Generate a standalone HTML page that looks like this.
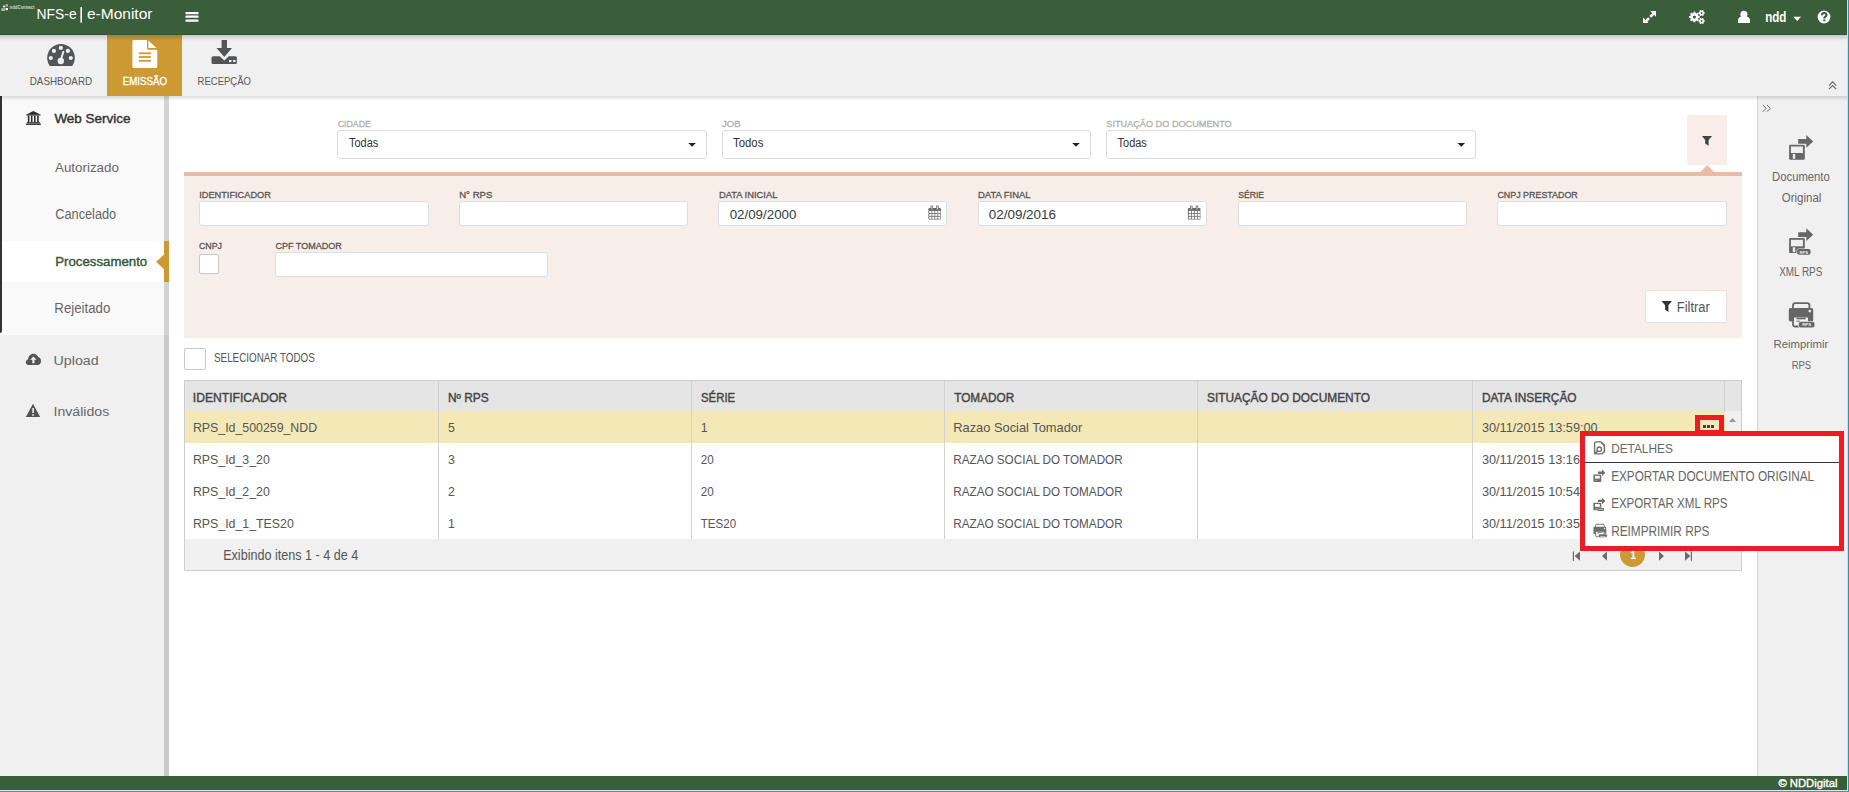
<!DOCTYPE html>
<html><head><meta charset="utf-8">
<style>
html,body{margin:0;padding:0;width:1849px;height:792px;overflow:hidden;background:#fff;font-family:"Liberation Sans",sans-serif;}
.a{position:absolute;box-sizing:border-box;}
svg{position:absolute;left:0;top:0;}
</style></head><body>
<!-- frame -->
<div class="a" style="left:1847px;top:0;width:1px;height:792px;background:#dcdcdc"></div>
<div class="a" style="left:1848px;top:0;width:1px;height:792px;background:#3f8aa8"></div>
<div class="a" style="left:0;top:790px;width:1848px;height:1px;background:#e4e4e4"></div>
<div class="a" style="left:0;top:791px;width:1849px;height:1px;background:#4a95b5"></div>
<!-- header -->
<div class="a" style="left:0;top:0;width:1847px;height:35px;background:#3b5e3a;border-bottom:1px solid #325634"></div>
<!-- toolbar -->
<div class="a" style="left:0;top:35px;width:1847px;height:61px;background:#f0f0f0"></div>
<div class="a" style="left:107px;top:35px;width:75px;height:61px;background:#cc9933"></div>
<div class="a" style="left:0;top:35px;width:1847px;height:6px;background:linear-gradient(rgba(0,0,0,.17),rgba(0,0,0,0))"></div>
<!-- sidebar -->
<div class="a" style="left:0;top:96px;width:164px;height:680px;background:#f0f0f0"></div>
<div class="a" style="left:164px;top:96px;width:5px;height:680px;background:#cbcbcb"></div>
<div class="a" style="left:164px;top:96px;width:5px;height:239px;background:#d3d3d3"></div>
<div class="a" style="left:0;top:96px;width:164px;height:239px;background:#f9f9f9"></div>
<div class="a" style="left:0;top:96px;width:2px;height:237px;background:#333;border-radius:0 0 2px 0"></div>
<div class="a" style="left:2px;top:241px;width:162px;height:41px;background:#fff"></div>
<div class="a" style="left:164px;top:241px;width:5px;height:41px;background:#cc9933"></div>
<svg width="200" height="300" style="z-index:1"><path fill="#cc9933" d="M164.2,254.4 L156.1,261.7 L164.2,269.4 Z"/></svg>
<!-- right panel -->
<div class="a" style="left:1757px;top:96px;width:90px;height:680px;background:#f0f0f0;border-left:1px solid #d4d4d4"></div>
<!-- toolbar shadow -->
<div class="a" style="left:0;top:96px;width:1847px;height:5px;background:linear-gradient(rgba(0,0,0,.13),rgba(0,0,0,0))"></div>
<!-- footer -->
<div class="a" style="left:0;top:776px;width:1847px;height:14px;background:#3b5e3a"></div>

<!-- filter selects -->
<div class="a" style="left:337px;top:130px;width:370px;height:29px;border:1px solid #dcdcdc;border-radius:3px;background:#fff"></div>
<div class="a" style="left:722px;top:130px;width:369px;height:29px;border:1px solid #dcdcdc;border-radius:3px;background:#fff"></div>
<div class="a" style="left:1106px;top:130px;width:370px;height:29px;border:1px solid #dcdcdc;border-radius:3px;background:#fff"></div>
<div class="a" style="left:1687px;top:115px;width:40px;height:50px;background:#f8ede8"></div>
<!-- filter panel -->
<div class="a" style="left:184px;top:172px;width:1558px;height:166px;background:#f8eee9;border-top:4px solid #e8bca6"></div>
<div class="a" style="left:199px;top:201px;width:230px;height:25px;border:1px solid #d8e0e3;border-radius:3px;background:#fff"></div>
<div class="a" style="left:459px;top:201px;width:229px;height:25px;border:1px solid #d8e0e3;border-radius:3px;background:#fff"></div>
<div class="a" style="left:718px;top:201px;width:229px;height:25px;border:1px solid #d8e0e3;border-radius:3px;background:#fff"></div>
<div class="a" style="left:978px;top:201px;width:229px;height:25px;border:1px solid #d8e0e3;border-radius:3px;background:#fff"></div>
<div class="a" style="left:1238px;top:201px;width:229px;height:25px;border:1px solid #d8e0e3;border-radius:3px;background:#fff"></div>
<div class="a" style="left:1497px;top:201px;width:230px;height:25px;border:1px solid #d8e0e3;border-radius:3px;background:#fff"></div>
<div class="a" style="left:199px;top:254px;width:20px;height:20px;border:1px solid #c8c8c8;border-radius:2px;background:#fff"></div>
<div class="a" style="left:275px;top:252px;width:273px;height:25px;border:1px solid #d8e0e3;border-radius:3px;background:#fff"></div>
<div class="a" style="left:1645px;top:290px;width:82px;height:33px;border:1px solid #e6dfdc;border-radius:3px;background:#fff"></div>
<!-- select all -->
<div class="a" style="left:184px;top:348px;width:22px;height:22px;border:1px solid #c8c8c8;border-radius:2px;background:#fff"></div>
<!-- table -->
<div class="a" style="left:184px;top:380px;width:1558px;height:191px;border:1px solid #cdcdcd;background:#fff"></div>
<div class="a" style="left:185px;top:381px;width:1556px;height:30px;background:#e5e5e5"></div>
<div class="a" style="left:185px;top:411px;width:1540px;height:32px;background:#f4e8b6"></div>
<div class="a" style="left:1725px;top:411px;width:16px;height:128px;background:#f0f0f0"></div>
<div class="a" style="left:185px;top:539px;width:1556px;height:31px;background:#f0f0f0"></div>
<div class="a" style="left:438px;top:381px;width:1px;height:158px;background:#d2d2d2"></div>
<div class="a" style="left:691px;top:381px;width:1px;height:158px;background:#d2d2d2"></div>
<div class="a" style="left:944px;top:381px;width:1px;height:158px;background:#d2d2d2"></div>
<div class="a" style="left:1197px;top:381px;width:1px;height:158px;background:#d2d2d2"></div>
<div class="a" style="left:1472px;top:381px;width:1px;height:158px;background:#d2d2d2"></div>
<div class="a" style="left:1724px;top:381px;width:1px;height:30px;background:#d2d2d2"></div>
<!-- pager circle -->
<div class="a" style="left:1620px;top:542px;width:25px;height:25px;border-radius:50%;background:#cc9933"></div>

<svg width="1849" height="792" style="z-index:2">
<g fill="#ffffff"><rect x="5.6" y="4.2" width="2.4" height="2.4" opacity="0.55"/><rect x="3" y="5.6" width="2.2" height="1.8" opacity="0.9"/><rect x="5.6" y="8" width="2.4" height="2.2" opacity="1"/><rect x="1.3" y="8.2" width="3.8" height="2.8" opacity="0.55"/></g>
<text x="9.6" y="8.8" font-size="5.2" font-weight="700" fill="#e2eae2" font-family="Liberation Sans" textLength="24.8" lengthAdjust="spacingAndGlyphs" opacity="0.85">nddConnect</text>
<rect x="80.4" y="7.1" width="1.6" height="15.5" fill="#fff"/>
<g fill="#fff"><rect x="185.5" y="12" width="13" height="2.2" rx="0.6"/><rect x="185.5" y="15.6" width="13" height="2.2" rx="0.6"/><rect x="185.5" y="19.6" width="13" height="2.2" rx="0.6"/></g>
<g fill="#fff"><path d="M1650.2,11 H1656 V16.8 Z"/><path d="M1643,17.6 V23 H1648.6 Z"/><path d="M1645.6,21.6 L1649,18.2 M1650.3,16.9 L1653.8,13.4" stroke="#fff" stroke-width="2.6"/></g>
<path fill="#fff" fill-rule="evenodd" d="M1698.48,15.99 L1699.71,16.02 L1699.71,17.98 L1698.48,18.01 L1698.00,19.17 L1698.85,20.06 L1697.46,21.45 L1696.57,20.60 L1695.41,21.08 L1695.38,22.31 L1693.42,22.31 L1693.39,21.08 L1692.23,20.60 L1691.34,21.45 L1689.95,20.06 L1690.80,19.17 L1690.32,18.01 L1689.09,17.98 L1689.09,16.02 L1690.32,15.99 L1690.80,14.83 L1689.95,13.94 L1691.34,12.55 L1692.23,13.40 L1693.39,12.92 L1693.42,11.69 L1695.38,11.69 L1695.41,12.92 L1696.57,13.40 L1697.46,12.55 L1698.85,13.94 L1698.00,14.83ZM1696.00,17.00 a1.6,1.6 0 1 0 -3.20,0 a1.6,1.6 0 1 0 3.20,0Z"/>
<path fill="#fff" fill-rule="evenodd" d="M1703.97,12.20 L1704.71,12.23 L1704.71,13.77 L1703.97,13.80 L1703.48,14.65 L1703.82,15.30 L1702.48,16.08 L1702.09,15.45 L1701.11,15.45 L1700.72,16.08 L1699.38,15.30 L1699.72,14.65 L1699.23,13.80 L1698.49,13.77 L1698.49,12.23 L1699.23,12.20 L1699.72,11.35 L1699.38,10.70 L1700.72,9.92 L1701.11,10.55 L1702.09,10.55 L1702.48,9.92 L1703.82,10.70 L1703.48,11.35ZM1702.50,13.00 a0.9,0.9 0 1 0 -1.80,0 a0.9,0.9 0 1 0 1.80,0Z"/>
<path fill="#fff" fill-rule="evenodd" d="M1703.97,20.20 L1704.71,20.23 L1704.71,21.77 L1703.97,21.80 L1703.48,22.65 L1703.82,23.30 L1702.48,24.08 L1702.09,23.45 L1701.11,23.45 L1700.72,24.08 L1699.38,23.30 L1699.72,22.65 L1699.23,21.80 L1698.49,21.77 L1698.49,20.23 L1699.23,20.20 L1699.72,19.35 L1699.38,18.70 L1700.72,17.92 L1701.11,18.55 L1702.09,18.55 L1702.48,17.92 L1703.82,18.70 L1703.48,19.35ZM1702.50,21.00 a0.9,0.9 0 1 0 -1.80,0 a0.9,0.9 0 1 0 1.80,0Z"/>
<circle cx="1743.9" cy="14.2" r="3.5" fill="#fff"/>
<path fill="#fff" d="M1738.1,22.9 V20.6 C1738.1,18.2 1739.4,16.9 1741.2,16.6 C1742.6,17.6 1745.2,17.6 1746.8,16.6 C1748.7,16.9 1750,18.2 1750,20.6 V22.9 Z"/>
<path fill="#fff" d="M1793.3,16.8 H1801.1 L1797.2,20.9 Z"/>
<circle cx="1824" cy="17" r="6.4" fill="#fff"/>
<path fill="none" stroke="#3b5e3a" stroke-width="2.1" d="M1821.9,15.3 C1821.9,13.6 1823,13 1824.2,13 C1825.6,13 1826.5,13.9 1826.5,15 C1826.5,16.6 1824.3,16.7 1824.3,18.6"/>
<rect x="1823.3" y="19.4" width="2" height="1.8" fill="#3b5e3a"/>
<path fill="#525456" d="M49.8,65.9 A13.8,13.8 0 1 1 72.2,65.9 Z"/>
<circle cx="60.8" cy="47.9" r="2.1" fill="#f0f0f0"/>
<circle cx="53.9" cy="50.9" r="2.1" fill="#f0f0f0"/>
<circle cx="67.9" cy="50.9" r="2.1" fill="#f0f0f0"/>
<circle cx="50.8" cy="58" r="2.1" fill="#f0f0f0"/>
<circle cx="70.8" cy="58" r="2.1" fill="#f0f0f0"/>
<circle cx="60.8" cy="61" r="3.2" fill="#f0f0f0"/>
<path d="M60.8,60 L63.4,51.6" stroke="#f0f0f0" stroke-width="1.9" stroke-linecap="round"/>
<path fill="#fff" d="M132.4,41.5 Q132.4,40 133.9,40 H147 V48.6 Q147,49.7 148.1,49.7 H157.3 V66.4 Q157.3,67.9 155.8,67.9 H133.9 Q132.4,67.9 132.4,66.4 Z"/>
<path fill="#fff" d="M148.3,40.6 V48.1 H156.5 Z"/>
<g fill="#cc9933"><rect x="138.8" y="52.4" width="12.1" height="1.8"/><rect x="138.8" y="56.1" width="12.1" height="1.8"/><rect x="138.8" y="59.9" width="12.1" height="1.8"/></g>
<g fill="#525456"><rect x="221.6" y="40" width="5.4" height="9"/><path d="M216.5,48.1 H232 L224.3,57 Z"/>
<path d="M213,56.2 H219.7 L224.3,60.6 L228.8,56.2 H235.4 Q236.9,56.2 236.9,57.7 V62.4 Q236.9,63.9 235.4,63.9 H213 Q211.5,63.9 211.5,62.4 V57.7 Q211.5,56.2 213,56.2 Z"/></g>
<g fill="#f0f0f0"><rect x="229" y="60" width="2.5" height="2.1"/><rect x="233.1" y="60" width="2.4" height="2.1"/></g>
<g fill="#2b2b2b"><path d="M25.9,114.8 L33.3,111 L40.9,114.8 Z"/><rect x="26.3" y="114.6" width="14.2" height="0.9"/>
<rect x="27.8" y="115.6" width="1.6" height="6.8"/>
<rect x="30.9" y="115.6" width="1.6" height="6.8"/>
<rect x="34.0" y="115.6" width="1.6" height="6.8"/>
<rect x="37.1" y="115.6" width="1.6" height="6.8"/>
<rect x="26.8" y="122.2" width="13.2" height="1.2"/><rect x="25.9" y="123.6" width="15" height="1.3"/></g>
<path fill="#525456" d="M28.5,365 C26.9,365 25.8,363.9 25.8,362.3 C25.8,360.9 26.8,359.8 28.1,359.6 C28.2,356.4 30.5,353.8 33.5,353.8 C35.7,353.8 37.4,355.1 38.1,357 C39.9,357.3 41,358.9 41,360.9 C41,363.2 39.6,365 37.5,365 Z"/>
<path fill="#f0f0f0" d="M33.4,356.6 L36.6,359.8 H34.5 V363.2 H32.3 V359.8 H30.2 Z"/>
<path fill="#525456" d="M33,403.8 L40.2,416.9 H25.8 Z"/>
<g fill="#f0f0f0"><rect x="32.3" y="408" width="1.6" height="5"/><rect x="32.3" y="414.2" width="1.6" height="1.6"/></g>
<path fill="none" stroke="#666" stroke-width="1.1" d="M1828.9,85.6 L1832.6,81.9 L1836.3,85.6 M1828.9,89.2 L1832.6,85.5 L1836.3,89.2"/>
<path fill="none" stroke="#6a6a6a" stroke-width="1.0" d="M1762.8,104.9 L1766.1,108.3 L1762.8,111.7 M1767,104.9 L1770.3,108.3 L1767,111.7"/>
<path fill="#222" d="M688.3,143.1 H695.9 L692.1,146.8 Z"/>
<path fill="#222" d="M1072.2,143.1 H1079.8 L1076.0,146.8 Z"/>
<path fill="#222" d="M1457.5,143.1 H1465.1 L1461.3,146.8 Z"/>
<path fill="#444" d="M1702,136 H1712.1 L1708.6,140 V145.8 L1705.2,143.6 V140 Z"/>
<path fill="#e8bca6" d="M1700.1,172.2 L1707.2,165.1 L1714.3,172.2 Z"/>
<path fill="#333" d="M1661.5,301 H1672 L1668.4,305.2 V312 L1665.1,309.8 V305.2 Z"/>
<rect x="928.4" y="208" width="12.5" height="11.6" rx="0.8" fill="#6a6a6a"/>
<rect x="929.30" y="210.90" width="2.2" height="2.1" fill="#fff"/>
<rect x="929.30" y="213.80" width="2.2" height="2.1" fill="#fff"/>
<rect x="929.30" y="216.70" width="2.2" height="2.1" fill="#fff"/>
<rect x="932.25" y="210.90" width="2.2" height="2.1" fill="#fff"/>
<rect x="932.25" y="213.80" width="2.2" height="2.1" fill="#fff"/>
<rect x="932.25" y="216.70" width="2.2" height="2.1" fill="#fff"/>
<rect x="935.20" y="210.90" width="2.2" height="2.1" fill="#fff"/>
<rect x="935.20" y="213.80" width="2.2" height="2.1" fill="#fff"/>
<rect x="935.20" y="216.70" width="2.2" height="2.1" fill="#fff"/>
<rect x="938.15" y="210.90" width="2.2" height="2.1" fill="#fff"/>
<rect x="938.15" y="213.80" width="2.2" height="2.1" fill="#fff"/>
<rect x="938.15" y="216.70" width="2.2" height="2.1" fill="#fff"/>
<rect x="931.0" y="206" width="1.7" height="3.8" fill="#ddd" stroke="#6a6a6a" stroke-width="0.7"/>
<rect x="936.6" y="206" width="1.7" height="3.8" fill="#ddd" stroke="#6a6a6a" stroke-width="0.7"/>
<rect x="1187.9" y="208" width="12.5" height="11.6" rx="0.8" fill="#6a6a6a"/>
<rect x="1188.80" y="210.90" width="2.2" height="2.1" fill="#fff"/>
<rect x="1188.80" y="213.80" width="2.2" height="2.1" fill="#fff"/>
<rect x="1188.80" y="216.70" width="2.2" height="2.1" fill="#fff"/>
<rect x="1191.75" y="210.90" width="2.2" height="2.1" fill="#fff"/>
<rect x="1191.75" y="213.80" width="2.2" height="2.1" fill="#fff"/>
<rect x="1191.75" y="216.70" width="2.2" height="2.1" fill="#fff"/>
<rect x="1194.70" y="210.90" width="2.2" height="2.1" fill="#fff"/>
<rect x="1194.70" y="213.80" width="2.2" height="2.1" fill="#fff"/>
<rect x="1194.70" y="216.70" width="2.2" height="2.1" fill="#fff"/>
<rect x="1197.65" y="210.90" width="2.2" height="2.1" fill="#fff"/>
<rect x="1197.65" y="213.80" width="2.2" height="2.1" fill="#fff"/>
<rect x="1197.65" y="216.70" width="2.2" height="2.1" fill="#fff"/>
<rect x="1190.5" y="206" width="1.7" height="3.8" fill="#ddd" stroke="#6a6a6a" stroke-width="0.7"/>
<rect x="1196.1" y="206" width="1.7" height="3.8" fill="#ddd" stroke="#6a6a6a" stroke-width="0.7"/>
<rect x="1789.10" y="144.80" width="15.70" height="15.00" rx="1.20" fill="#666666"/>
<rect x="1790.90" y="146.50" width="12.00" height="6.50" fill="#f0f0f0"/>
<rect x="1792.80" y="154.00" width="2.40" height="4.80" fill="#f0f0f0"/>
<path d="M1798.20,139.00 H1806.30 V134.90 L1813.20,141.40 L1806.30,147.80 V143.70 H1798.20 Z" fill="#666666" stroke="#f0f0f0" stroke-width="1.20" paint-order="stroke"/>
<rect x="1789.10" y="238.10" width="15.70" height="15.00" rx="1.20" fill="#666666"/>
<rect x="1790.90" y="239.80" width="12.00" height="6.50" fill="#f0f0f0"/>
<rect x="1792.80" y="247.30" width="2.40" height="4.80" fill="#f0f0f0"/>
<path d="M1798.20,232.30 H1806.30 V228.20 L1813.20,234.70 L1806.30,241.10 V237.00 H1798.20 Z" fill="#666666" stroke="#f0f0f0" stroke-width="1.20" paint-order="stroke"/>
<rect x="1797.10" y="249.00" width="13.50" height="5.80" rx="2.00" fill="#666666" stroke="#f0f0f0" stroke-width="1.20" paint-order="stroke"/>
<text x="1803.85" y="253.50" font-size="4.20" font-weight="700" fill="#f0f0f0" text-anchor="middle" font-family="Liberation Sans">RPS</text>
<rect x="1793.00" y="303.20" width="16.40" height="7.00" rx="2.20" fill="none" stroke="#666666" stroke-width="1.80"/>
<rect x="1788.80" y="307.90" width="24.40" height="13.70" rx="1.80" fill="#666666"/>
<circle cx="1809.80" cy="311.10" r="1.30" fill="#f0f0f0"/>
<rect x="1793.10" y="316.50" width="15.80" height="10.00" rx="1.50" fill="#f0f0f0" stroke="#666666" stroke-width="1.80"/>
<rect x="1796.50" y="317.90" width="9.20" height="1.40" fill="#666666"/>
<rect x="1796.50" y="320.70" width="3.50" height="1.00" fill="#666666"/>
<rect x="1798.80" y="321.80" width="15.70" height="5.80" rx="2.00" fill="#666666" stroke="#f0f0f0" stroke-width="1.20" paint-order="stroke"/>
<text x="1806.65" y="326.40" font-size="4.40" font-weight="700" fill="#f0f0f0" text-anchor="middle" font-family="Liberation Sans">RPS</text>
<path fill="#999" d="M1728.9,421.9 L1732.5,417.9 L1736,421.9 Z"/>
<g fill="#6b6b6b"><rect x="1572.8" y="551.4" width="1.2" height="9.4"/><path d="M1580,551.4 V560.8 L1574.6,556.1 Z"/>
<path d="M1607,551.4 V560.8 L1602,556.1 Z"/><path d="M1659,551.4 V560.8 L1664,556.1 Z"/>
<path d="M1685,551.4 V560.8 L1690.4,556.1 Z"/><rect x="1690.8" y="551.4" width="1.2" height="9.4"/></g>
<text x="36.61" y="19.00" font-size="15.55" font-weight="400" fill="#ffffff" textLength="40.07" lengthAdjust="spacingAndGlyphs">NFS-e</text>
<text x="86.90" y="19.00" font-size="15.55" font-weight="400" fill="#ffffff" textLength="65.58" lengthAdjust="spacingAndGlyphs">e-Monitor</text>
<text x="1765.20" y="22.00" font-size="14.03" font-weight="700" fill="#ffffff" textLength="21.26" lengthAdjust="spacingAndGlyphs">ndd</text>
<text x="29.70" y="85.10" font-size="11.34" font-weight="400" fill="#595959" textLength="62.46" lengthAdjust="spacingAndGlyphs">DASHBOARD</text>
<text x="122.80" y="85.10" font-size="10.21" font-weight="400" fill="#ffffff" stroke="#ffffff" stroke-width="0.33" textLength="44.24" lengthAdjust="spacingAndGlyphs">EMISSÃO</text>
<text x="197.60" y="85.10" font-size="11.34" font-weight="400" fill="#595959" textLength="53.34" lengthAdjust="spacingAndGlyphs">RECEPÇÃO</text>
<text x="54.40" y="123.10" font-size="12.43" font-weight="400" fill="#333333" stroke="#333333" stroke-width="0.40" textLength="76.10" lengthAdjust="spacingAndGlyphs">Web Service</text>
<text x="55.00" y="171.90" font-size="13.52" font-weight="400" fill="#666666" textLength="63.91" lengthAdjust="spacingAndGlyphs">Autorizado</text>
<text x="55.30" y="219.20" font-size="13.95" font-weight="400" fill="#666666" textLength="60.87" lengthAdjust="spacingAndGlyphs">Cancelado</text>
<text x="55.30" y="266.00" font-size="11.91" font-weight="400" fill="#34573a" stroke="#34573a" stroke-width="0.38" textLength="91.88" lengthAdjust="spacingAndGlyphs">Processamento</text>
<text x="54.35" y="313.00" font-size="13.95" font-weight="400" fill="#666666" textLength="56.01" lengthAdjust="spacingAndGlyphs">Rejeitado</text>
<text x="53.55" y="364.80" font-size="13.52" font-weight="400" fill="#666666" textLength="45.10" lengthAdjust="spacingAndGlyphs">Upload</text>
<text x="53.52" y="416.20" font-size="13.08" font-weight="400" fill="#666666" textLength="55.78" lengthAdjust="spacingAndGlyphs">Inválidos</text>
<text x="337.70" y="126.80" font-size="8.77" font-weight="400" fill="#b0b0b0" stroke="#b0b0b0" stroke-width="0.28" textLength="33.15" lengthAdjust="spacingAndGlyphs">CIDADE</text>
<text x="722.00" y="126.80" font-size="8.77" font-weight="400" fill="#b0b0b0" stroke="#b0b0b0" stroke-width="0.28" textLength="18.83" lengthAdjust="spacingAndGlyphs">JOB</text>
<text x="1106.30" y="126.80" font-size="8.77" font-weight="400" fill="#b0b0b0" stroke="#b0b0b0" stroke-width="0.28" textLength="125.41" lengthAdjust="spacingAndGlyphs">SITUAÇÃO DO DOCUMENTO</text>
<text x="349.00" y="147.20" font-size="12.5" font-weight="400" fill="#333333" textLength="29.22" lengthAdjust="spacingAndGlyphs">Todas</text>
<text x="733.10" y="147.20" font-size="12.5" font-weight="400" fill="#333333" textLength="30.23" lengthAdjust="spacingAndGlyphs">Todos</text>
<text x="1117.60" y="147.20" font-size="12.5" font-weight="400" fill="#333333" textLength="29.22" lengthAdjust="spacingAndGlyphs">Todas</text>
<text x="199.20" y="198.00" font-size="9.15" font-weight="400" fill="#555555" stroke="#555555" stroke-width="0.29" textLength="71.69" lengthAdjust="spacingAndGlyphs">IDENTIFICADOR</text>
<text x="459.20" y="198.00" font-size="9.15" font-weight="400" fill="#555555" stroke="#555555" stroke-width="0.29" textLength="33.19" lengthAdjust="spacingAndGlyphs">N° RPS</text>
<text x="718.90" y="198.00" font-size="9.15" font-weight="400" fill="#555555" stroke="#555555" stroke-width="0.29" textLength="58.48" lengthAdjust="spacingAndGlyphs">DATA INICIAL</text>
<text x="978.00" y="198.00" font-size="9.15" font-weight="400" fill="#555555" stroke="#555555" stroke-width="0.29" textLength="52.58" lengthAdjust="spacingAndGlyphs">DATA FINAL</text>
<text x="1238.20" y="198.00" font-size="9.15" font-weight="400" fill="#555555" stroke="#555555" stroke-width="0.29" textLength="25.88" lengthAdjust="spacingAndGlyphs">SÉRIE</text>
<text x="1497.40" y="198.00" font-size="9.15" font-weight="400" fill="#555555" stroke="#555555" stroke-width="0.29" textLength="80.40" lengthAdjust="spacingAndGlyphs">CNPJ PRESTADOR</text>
<text x="199.00" y="249.00" font-size="9.81" font-weight="400" fill="#555555" stroke="#555555" stroke-width="0.31" textLength="22.91" lengthAdjust="spacingAndGlyphs">CNPJ</text>
<text x="275.40" y="249.00" font-size="9.81" font-weight="400" fill="#555555" stroke="#555555" stroke-width="0.31" textLength="66.37" lengthAdjust="spacingAndGlyphs">CPF TOMADOR</text>
<text x="729.70" y="219.00" font-size="13.08" font-weight="400" fill="#333a45" textLength="66.68" lengthAdjust="spacingAndGlyphs">02/09/2000</text>
<text x="988.80" y="219.00" font-size="13.08" font-weight="400" fill="#333a45" textLength="67.18" lengthAdjust="spacingAndGlyphs">02/09/2016</text>
<text x="1676.75" y="311.50" font-size="15.26" font-weight="400" fill="#555555" textLength="33.12" lengthAdjust="spacingAndGlyphs">Filtrar</text>
<text x="214.00" y="362.10" font-size="12.06" font-weight="400" fill="#555555" textLength="100.83" lengthAdjust="spacingAndGlyphs">SELECIONAR TODOS</text>
<text x="192.88" y="402.00" font-size="11.91" font-weight="400" fill="#444444" stroke="#444444" stroke-width="0.38" textLength="94.21" lengthAdjust="spacingAndGlyphs">IDENTIFICADOR</text>
<text x="447.90" y="402.00" font-size="11.91" font-weight="400" fill="#444444" stroke="#444444" stroke-width="0.38" textLength="40.84" lengthAdjust="spacingAndGlyphs">Nº RPS</text>
<text x="701.00" y="402.00" font-size="11.91" font-weight="400" fill="#444444" stroke="#444444" stroke-width="0.38" textLength="34.14" lengthAdjust="spacingAndGlyphs">SÉRIE</text>
<text x="954.20" y="402.00" font-size="11.91" font-weight="400" fill="#444444" stroke="#444444" stroke-width="0.38" textLength="60.00" lengthAdjust="spacingAndGlyphs">TOMADOR</text>
<text x="1207.00" y="402.00" font-size="11.91" font-weight="400" fill="#444444" stroke="#444444" stroke-width="0.38" textLength="162.96" lengthAdjust="spacingAndGlyphs">SITUAÇÃO DO DOCUMENTO</text>
<text x="1481.90" y="402.00" font-size="11.91" font-weight="400" fill="#444444" stroke="#444444" stroke-width="0.38" textLength="94.66" lengthAdjust="spacingAndGlyphs">DATA INSERÇÃO</text>
<text x="192.95" y="432.10" font-size="12.94" font-weight="400" fill="#555555" textLength="124.18" lengthAdjust="spacingAndGlyphs">RPS_Id_500259_NDD</text>
<text x="447.90" y="432.10" font-size="12.94" font-weight="400" fill="#555555" textLength="6.86" lengthAdjust="spacingAndGlyphs">5</text>
<text x="700.80" y="432.10" font-size="12.94" font-weight="400" fill="#555555" textLength="6.86" lengthAdjust="spacingAndGlyphs">1</text>
<text x="953.21" y="432.10" font-size="12.94" font-weight="400" fill="#555555" textLength="129.11" lengthAdjust="spacingAndGlyphs">Razao Social Tomador</text>
<text x="1481.90" y="432.10" font-size="12.94" font-weight="400" fill="#555555" textLength="115.79" lengthAdjust="spacingAndGlyphs">30/11/2015 13:59:00</text>
<text x="192.95" y="464.10" font-size="12.94" font-weight="400" fill="#555555" textLength="76.84" lengthAdjust="spacingAndGlyphs">RPS_Id_3_20</text>
<text x="447.90" y="464.10" font-size="12.94" font-weight="400" fill="#555555" textLength="6.86" lengthAdjust="spacingAndGlyphs">3</text>
<text x="700.80" y="464.10" font-size="12.94" font-weight="400" fill="#555555" textLength="12.98" lengthAdjust="spacingAndGlyphs">20</text>
<text x="953.30" y="464.10" font-size="12.94" font-weight="400" fill="#555555" textLength="169.31" lengthAdjust="spacingAndGlyphs">RAZAO SOCIAL DO TOMADOR</text>
<text x="1481.90" y="464.10" font-size="12.94" font-weight="400" fill="#555555" textLength="115.79" lengthAdjust="spacingAndGlyphs">30/11/2015 13:16:00</text>
<text x="192.95" y="496.10" font-size="12.94" font-weight="400" fill="#555555" textLength="76.84" lengthAdjust="spacingAndGlyphs">RPS_Id_2_20</text>
<text x="447.90" y="496.10" font-size="12.94" font-weight="400" fill="#555555" textLength="6.86" lengthAdjust="spacingAndGlyphs">2</text>
<text x="700.80" y="496.10" font-size="12.94" font-weight="400" fill="#555555" textLength="12.98" lengthAdjust="spacingAndGlyphs">20</text>
<text x="953.30" y="496.10" font-size="12.94" font-weight="400" fill="#555555" textLength="169.31" lengthAdjust="spacingAndGlyphs">RAZAO SOCIAL DO TOMADOR</text>
<text x="1481.90" y="496.10" font-size="12.94" font-weight="400" fill="#555555" textLength="115.79" lengthAdjust="spacingAndGlyphs">30/11/2015 10:54:00</text>
<text x="192.95" y="528.10" font-size="12.94" font-weight="400" fill="#555555" textLength="100.85" lengthAdjust="spacingAndGlyphs">RPS_Id_1_TES20</text>
<text x="447.90" y="528.10" font-size="12.94" font-weight="400" fill="#555555" textLength="6.86" lengthAdjust="spacingAndGlyphs">1</text>
<text x="700.80" y="528.10" font-size="12.94" font-weight="400" fill="#555555" textLength="35.27" lengthAdjust="spacingAndGlyphs">TES20</text>
<text x="953.30" y="528.10" font-size="12.94" font-weight="400" fill="#555555" textLength="169.31" lengthAdjust="spacingAndGlyphs">RAZAO SOCIAL DO TOMADOR</text>
<text x="1481.90" y="528.10" font-size="12.94" font-weight="400" fill="#555555" textLength="115.79" lengthAdjust="spacingAndGlyphs">30/11/2015 10:35:00</text>
<text x="223.19" y="559.70" font-size="15.55" font-weight="400" fill="#555555" textLength="135.02" lengthAdjust="spacingAndGlyphs">Exibindo itens 1 - 4 de 4</text>
<text x="1630.30" y="558.90" font-size="10.32" font-weight="700" fill="#ffffff" textLength="5.74" lengthAdjust="spacingAndGlyphs">1</text>
<text x="1772.10" y="181.00" font-size="12.06" font-weight="400" fill="#666666" textLength="57.62" lengthAdjust="spacingAndGlyphs">Documento</text>
<text x="1781.80" y="202.20" font-size="12.06" font-weight="400" fill="#666666" textLength="39.54" lengthAdjust="spacingAndGlyphs">Original</text>
<text x="1779.20" y="275.50" font-size="11.92" font-weight="400" fill="#666666" textLength="43.15" lengthAdjust="spacingAndGlyphs">XML RPS</text>
<text x="1773.50" y="347.80" font-size="10.47" font-weight="400" fill="#666666" textLength="54.74" lengthAdjust="spacingAndGlyphs">Reimprimir</text>
<text x="1791.70" y="368.70" font-size="10.61" font-weight="400" fill="#666666" textLength="19.47" lengthAdjust="spacingAndGlyphs">RPS</text>
<text x="1778.40" y="787.20" font-size="11.12" font-weight="400" fill="#ffffff" stroke="#ffffff" stroke-width="0.36" textLength="59.08" lengthAdjust="spacingAndGlyphs">© NDDigital</text>
</svg>

<!-- menu -->
<div class="a" style="z-index:5;left:1695px;top:415px;width:29px;height:20px;background:#ec1c24"></div>
<div class="a" style="z-index:5;left:1700px;top:420px;width:19px;height:10px;background:#f4e8b6"></div>
<div class="a" style="z-index:5;left:1703px;top:425px;width:3px;height:3px;background:#3b3f5c"></div>
<div class="a" style="z-index:5;left:1707px;top:425px;width:3px;height:3px;background:#3b3f5c"></div>
<div class="a" style="z-index:5;left:1711px;top:425px;width:3px;height:3px;background:#3b3f5c"></div>
<div class="a" style="z-index:5;left:1580px;top:431px;width:264px;height:120px;border:5px solid #ec1c24;background:#fff"></div>
<div class="a" style="z-index:5;left:1585px;top:462px;width:254px;height:1px;background:#2d3550"></div>
<svg width="1849" height="792" style="z-index:6">
<path fill="none" stroke="#6e6e6e" stroke-width="1.4" d="M1594.6,443.6 Q1594.6,441.9 1596.3,441.9 H1600.8 L1604.3,445.4 V451.6 L1602,453.9 H1596.3 Q1594.6,453.9 1594.6,452.2 Z"/>
<path fill="none" stroke="#6e6e6e" stroke-width="1.1" d="M1601.6,442.3 L1604.6,445.3 V452.3"/>
<circle cx="1599.3" cy="449.2" r="2.2" fill="none" stroke="#6e6e6e" stroke-width="1.3"/>
<path d="M1597.7,450.9 L1594.4,454.3" stroke="#6e6e6e" stroke-width="1.6"/>
<rect x="1593.40" y="474.45" width="7.85" height="7.50" rx="0.60" fill="#6e6e6e"/>
<rect x="1595.00" y="475.90" width="4.80" height="2.70" fill="#ffffff"/>
<rect x="1595.60" y="479.60" width="0.80" height="1.50" fill="#ffffff" opacity="0.6"/>
<path d="M1597.95,471.55 H1602.00 V469.50 L1605.45,472.75 L1602.00,475.95 V473.90 H1597.95 Z" fill="#6e6e6e" stroke="#ffffff" stroke-width="0.60" paint-order="stroke"/>
<rect x="1593.40" y="502.65" width="7.85" height="7.50" rx="0.60" fill="#6e6e6e"/>
<rect x="1595.00" y="504.10" width="4.80" height="2.70" fill="#ffffff"/>
<rect x="1595.60" y="507.80" width="0.80" height="1.50" fill="#ffffff" opacity="0.6"/>
<path d="M1597.95,499.75 H1602.00 V497.70 L1605.45,500.95 L1602.00,504.15 V502.10 H1597.95 Z" fill="#6e6e6e" stroke="#ffffff" stroke-width="0.60" paint-order="stroke"/>
<rect x="1597.40" y="508.10" width="6.75" height="2.90" rx="1.00" fill="#6e6e6e" stroke="#ffffff" stroke-width="0.60" paint-order="stroke"/>
<text x="1600.78" y="510.35" font-size="2.10" font-weight="700" fill="#ffffff" text-anchor="middle" font-family="Liberation Sans">RPS</text>
<rect x="1595.63" y="524.28" width="8.69" height="3.71" rx="1.17" fill="none" stroke="#6e6e6e" stroke-width="0.95"/>
<rect x="1593.40" y="526.77" width="12.93" height="7.26" rx="0.95" fill="#6e6e6e"/>
<circle cx="1604.53" cy="528.46" r="0.69" fill="#ffffff"/>
<rect x="1595.68" y="531.33" width="8.37" height="5.30" rx="0.80" fill="#ffffff" stroke="#6e6e6e" stroke-width="0.95"/>
<rect x="1597.48" y="532.07" width="4.88" height="0.74" fill="#6e6e6e"/>
<rect x="1597.48" y="533.55" width="1.85" height="0.53" fill="#6e6e6e"/>
<rect x="1598.70" y="534.13" width="8.32" height="3.07" rx="1.06" fill="#6e6e6e" stroke="#ffffff" stroke-width="0.64" paint-order="stroke"/>
<text x="1602.86" y="536.57" font-size="2.33" font-weight="700" fill="#ffffff" text-anchor="middle" font-family="Liberation Sans">RPS</text>
<text x="1611.13" y="453.00" font-size="13.66" font-weight="400" fill="#666666" textLength="61.66" lengthAdjust="spacingAndGlyphs">DETALHES</text>
<text x="1611.15" y="481.10" font-size="13.81" font-weight="400" fill="#666666" textLength="202.87" lengthAdjust="spacingAndGlyphs">EXPORTAR DOCUMENTO ORIGINAL</text>
<text x="1611.16" y="508.40" font-size="13.81" font-weight="400" fill="#666666" textLength="116.31" lengthAdjust="spacingAndGlyphs">EXPORTAR XML RPS</text>
<text x="1611.17" y="535.90" font-size="14.24" font-weight="400" fill="#666666" textLength="98.24" lengthAdjust="spacingAndGlyphs">REIMPRIMIR RPS</text>
</svg>
</body></html>
